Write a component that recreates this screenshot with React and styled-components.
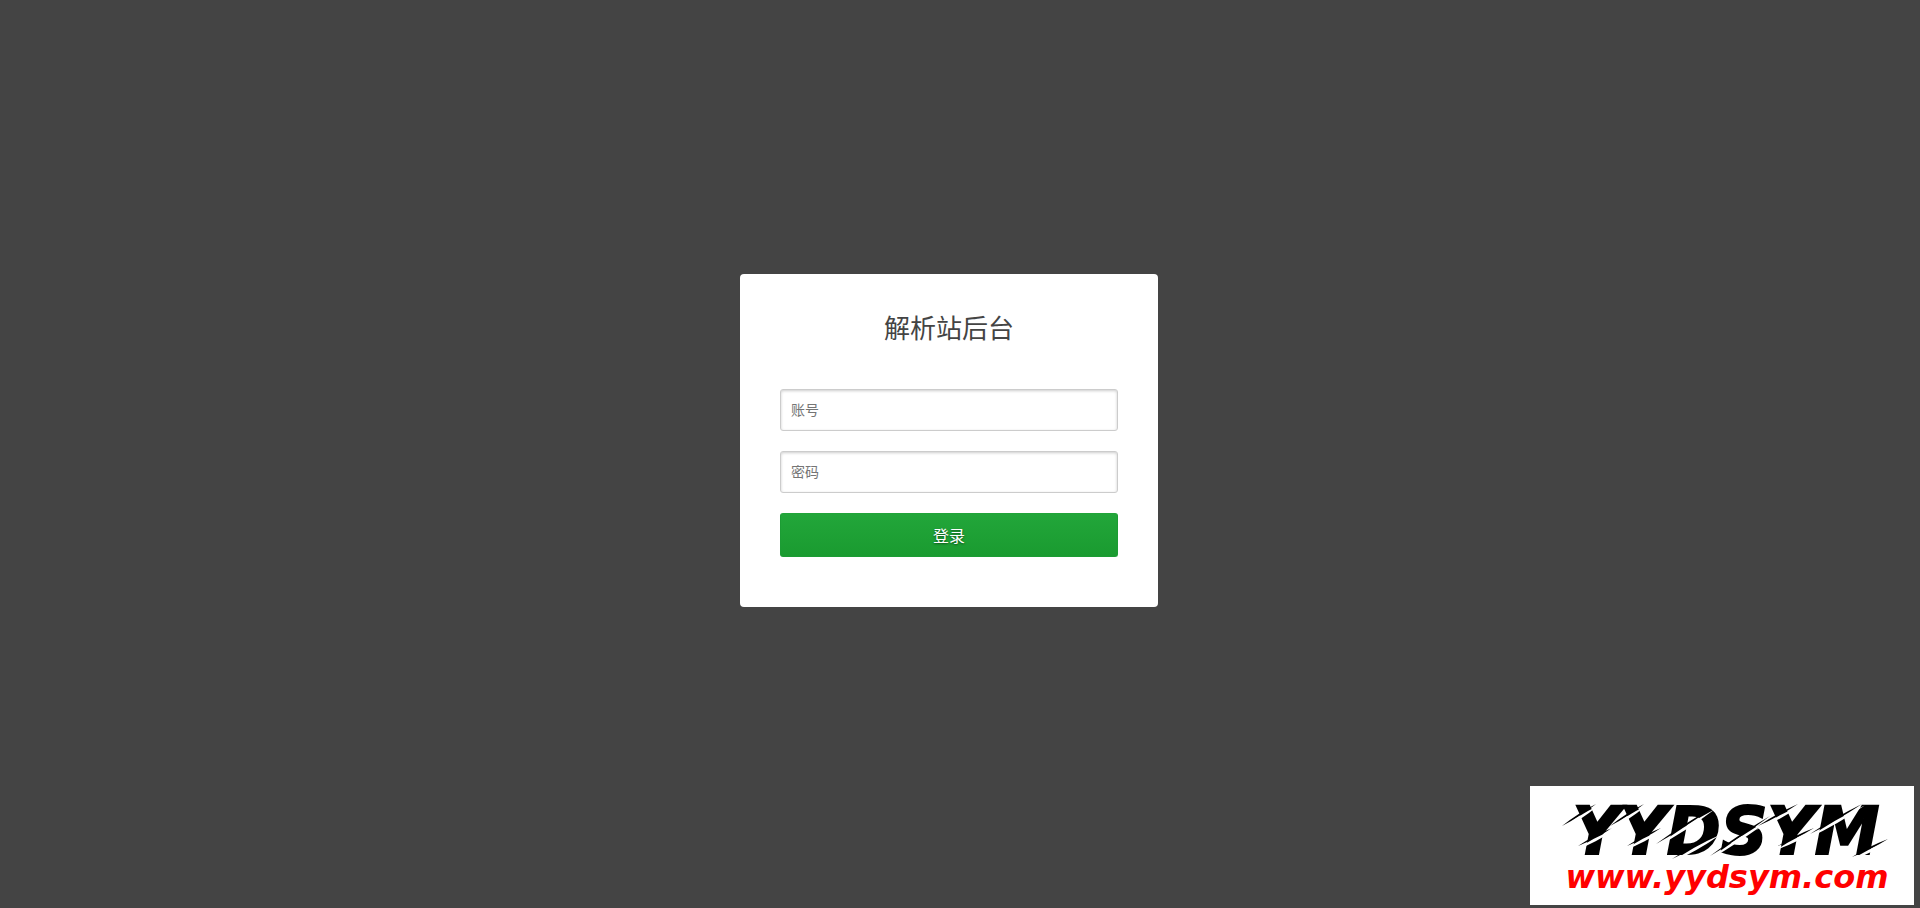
import React from "react";
import styled, { createGlobalStyle } from "styled-components";

const GlobalStyle = createGlobalStyle`
  * { box-sizing: border-box; }
  body {
    margin: 0;
    background: #444;
    color: #444;
    font-family: "Noto Sans CJK SC", sans-serif;
  }
`;

const Page = styled.div`
  display: flex;
  flex-direction: column;
  justify-content: space-between;
  min-height: 100vh;
  padding: 274px 6px 3px 0;
`;

const Main = styled.main`
  padding-right: 16px;
`;

const Card = styled.form`
  display: flex;
  flex-direction: column;
  gap: 20px;
  width: 418px;
  max-width: 100%;
  margin: 0 auto;
  padding: 33px 40px 50px;
  background: #fff;
  border-radius: 4px;
`;

const Title = styled.h1`
  margin: 0 0 22px;
  font-size: 26px;
  line-height: 40px;
  font-weight: 400;
  text-align: center;
`;

const Field = styled.input`
  width: 100%;
  height: 42px;
  padding: 0 10px 2px;
  border: 1px solid #ccc;
  border-radius: 3px;
  background: #fff;
  box-shadow: inset 0 1px 3px rgba(0, 0, 0, 0.2);
  color: #444;
  font-family: inherit;
  font-size: 14px;
  &::placeholder { color: #757575; opacity: 1; }
`;

const SubmitButton = styled.button`
  height: 44px;
  padding: 0;
  border: 1px solid #1c9c34;
  border-top-color: #22a43a;
  border-radius: 3px;
  background: linear-gradient(#22a63a, #1a9b30);
  color: #fff;
  font-family: inherit;
  font-size: 16px;
  text-shadow: 0 1px 2px rgba(0, 0, 0, 0.5);
  cursor: pointer;
`;

const Watermark = styled.a`
  display: block;
  align-self: flex-end;
  background: #fff;
`;

const Logo = styled.svg`
  display: block;
`;

const WordText = styled.text`
  font-family: "DejaVu Sans", sans-serif;
  font-size: 65px;
  font-weight: 700;
  font-style: italic;
  text-anchor: middle;
  fill: #000;
  stroke: #000;
  stroke-width: 2px;
`;

const UrlText = styled.text`
  font-family: "DejaVu Sans", sans-serif;
  font-size: 32px;
  font-weight: 700;
  font-style: italic;
  text-anchor: middle;
  fill: #f00;
`;

const cuts = [
  [32, 40, 66, 18],
  [48, 60, 82, 42],
  [80, 40, 114, 18],
  [97, 60, 131, 42],
  [126, 58, 182, 22],
  [142, 73, 188, 47],
  [180, 70, 240, 30],
  [228, 40, 268, 18],
  [248, 60, 284, 42],
  [280, 48, 332, 18],
  [322, 71, 358, 53],
];

function lens([x1, y1, x2, y2], thickness, inset, drop) {
  const dx = x2 - x1;
  const dy = y2 - y1;
  const length = Math.hypot(dx, dy);
  const nx = (-dy / length) * thickness;
  const ny = (dx / length) * thickness;
  const ax = x1 + dx * inset;
  const ay = y1 + dy * inset + drop;
  const bx = x2 - dx * inset;
  const by = y2 - dy * inset + drop;
  const mx = (ax + bx) / 2;
  const my = (ay + by) / 2;
  return `M${ax} ${ay}Q${mx + nx} ${my + ny} ${bx} ${by}Q${mx - nx} ${my - ny} ${ax} ${ay}Z`;
}

function YydsymLogo() {
  return (
    <Logo width="384" height="119" viewBox="0 0 384 119" role="img" aria-label="YYDSYM www.yydsym.com">
      <WordText x="196" y="68">YYDSYM</WordText>
      {cuts.map((cut) => (
        <g key={cut.join("-")}>
          <path d={lens(cut, 2, 0, 0)} fill="#000" />
          <path d={lens(cut, 3, -0.05, 3)} fill="#fff" />
        </g>
      ))}
      <UrlText x="197" y="102">www.yydsym.com</UrlText>
    </Logo>
  );
}

export default function App() {
  return (
    <>
      <GlobalStyle />
      <Page>
        <Main>
          <Card onSubmit={(e) => e.preventDefault()}>
            <Title>解析站后台</Title>
            <Field type="text" placeholder="账号" aria-label="账号" />
            <Field type="password" placeholder="密码" aria-label="密码" />
            <SubmitButton type="submit">登录</SubmitButton>
          </Card>
        </Main>
        <Watermark href="#">
          <YydsymLogo />
        </Watermark>
      </Page>
    </>
  );
}
